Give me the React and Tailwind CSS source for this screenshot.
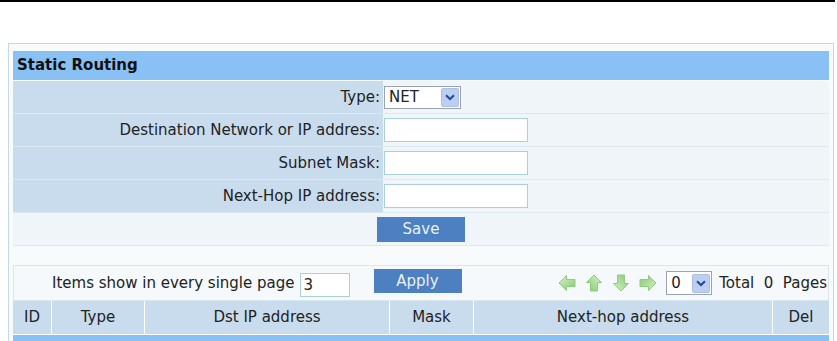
import React from "react";

const font = { fontFamily: '"DejaVu Sans", Tahoma, sans-serif' };

function Arrow({ dir }) {
    const rot = { left: 0, up: 90, right: 180, down: 270 }[dir];
    return (
        <svg width="18" height="18" viewBox="0 0 18 18" className="shrink-0">
            <defs>
                <linearGradient id={"g" + dir} x1="0" y1="0" x2="1" y2="1">
                    <stop offset="0" stopColor="#d8f2c8" />
                    <stop offset="1" stopColor="#86c872" />
                </linearGradient>
            </defs>
            <g transform={`rotate(${rot} 9 9)`}>
                <path
                    d="M1 9 L8.5 1.5 L8.5 5.5 L17 5.5 L17 12.5 L8.5 12.5 L8.5 16.5 Z"
                    fill={`url(#g${dir})`}
                    stroke="#8fcb7c"
                    strokeWidth="1"
                    strokeLinejoin="round"
                />
            </g>
        </svg>
    );
}

function Chevron() {
    return (
        <span className="flex items-center justify-center w-[18px] h-[19px] bg-[#bccff0] border border-[#a9bfe6] rounded-[2px]">
            <svg width="10" height="7" viewBox="0 0 10 7">
                <path d="M1 1.2 L5 5 L9 1.2" fill="none" stroke="#2a4a9a" strokeWidth="2.2" />
            </svg>
        </span>
    );
}

function FormRow({ label, children }) {
    return (
        <div className="flex h-[32px] mt-px">
            <div className="w-[370px] bg-[#c9dcee] flex items-center justify-end pr-[3px] text-[15px] text-[#222]">
                {label}
            </div>
            <div className="flex-1 bg-[#f0f5f9] flex items-center pl-px">{children}</div>
        </div>
    );
}

function TextBox({ w = "w-[144px]", value = "" }) {
    return (
        <input
            readOnly
            value={value}
            className={`${w} h-[24px] bg-white border border-[#a8d2d8] outline-none px-[3px] text-[15px] text-[#222]`}
            style={font}
        />
    );
}

export default function App() {
    const cols = [
        ["ID", "w-[38px]"],
        ["Type", "w-[92px]"],
        ["Dst IP address", "w-[244px]"],
        ["Mask", "w-[83px]"],
        ["Next-hop address", "w-[298px]"],
        ["Del", "flex-1"],
    ];

    return (
        <div className="w-[837px] h-[341px] overflow-hidden bg-white" style={font}>
            <div className="h-[2px] w-[835px] bg-black" />

            <div className="mt-[41px] ml-[8px] w-[826px] border border-[#c3d9e3] bg-[#f8fbfc] px-[4px] pt-[7px]">
                <div className="h-[29px] bg-[#89c1f4] flex items-center pl-[4px] text-[15px] font-bold text-[#111]">
                    Static Routing
                </div>

                <div className="bg-[#dbe9f1]">
                    <FormRow label="Type:">
                        <div className="flex items-center justify-between w-[77px] h-[23px] bg-white border border-[#9aa4ae] pl-[4px] pr-[1px]">
                            <span className="text-[15px] text-[#222]">NET</span>
                            <Chevron />
                        </div>
                    </FormRow>
                    <FormRow label="Destination Network or IP address:">
                        <TextBox />
                    </FormRow>
                    <FormRow label="Subnet Mask:">
                        <TextBox />
                    </FormRow>
                    <FormRow label="Next-Hop IP address:">
                        <TextBox />
                    </FormRow>
                    <div className="flex items-center justify-center h-[32px] mt-px bg-[#f0f5f9]">
                        <button className="w-[88px] h-[25px] bg-[#4c80c0] text-[#e9f1ff] text-[15px]">
                            Save
                        </button>
                    </div>
                </div>

                <div className="h-[20px] border-t border-[#dbe9f1]" />

                <div className="flex items-center h-[36px] border border-[#d8e6ee] bg-[#f5f9fb] pl-[38px] text-[15px] text-[#222]">
                    <span>Items show in every single page</span>
                    <TextBox w="w-[50px] ml-[5px] mt-[4px]" value="3" />
                    <button className="ml-[24px] -mt-[4px] w-[88px] h-[24px] bg-[#4c80c0] text-[#e9f1ff] text-[15px]">
                        Apply
                    </button>
                    <div className="flex-1" />
                    <div className="flex items-center gap-[9px]">
                        <Arrow dir="left" />
                        <Arrow dir="up" />
                        <Arrow dir="down" />
                        <Arrow dir="right" />
                    </div>
                    <div className="ml-[9px] flex items-center justify-between w-[46px] h-[24px] bg-white border border-[#9aa4ae] pl-[4px] pr-[1px]">
                        <span>0</span>
                        <Chevron />
                    </div>
                    <span className="ml-[7px] pr-px whitespace-pre">Total  0  Pages</span>
                </div>

                <div className="flex h-[33px] bg-white gap-px text-[15px] text-[#222]">
                    {cols.map(([t, w]) => (
                        <div key={t} className={`${w} bg-[#c9dcee] flex items-center justify-center`}>
                            {t}
                        </div>
                    ))}
                </div>

                <div className="h-px bg-white" />
                <div className="h-[20px] bg-[#89c1f4]" />
            </div>
        </div>
    );
}
